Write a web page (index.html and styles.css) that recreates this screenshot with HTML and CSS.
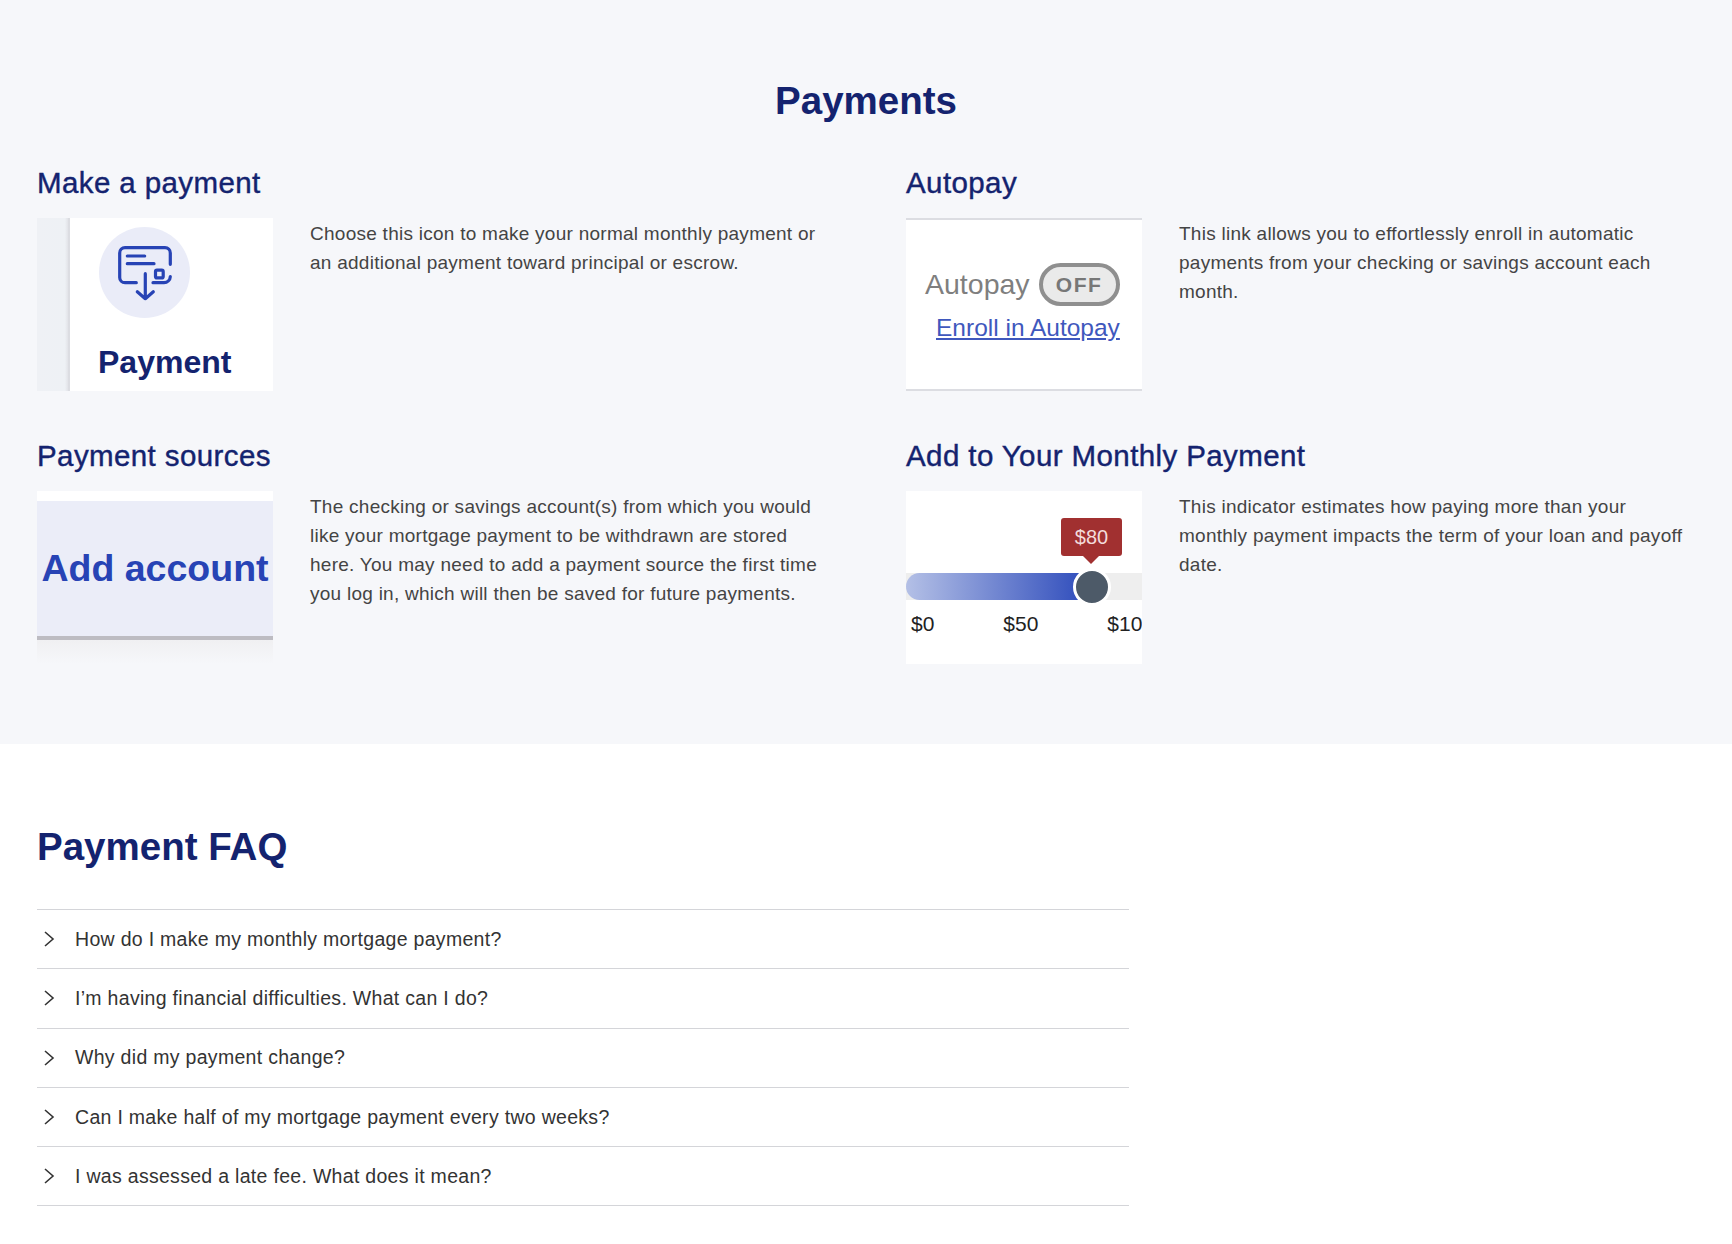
FILE: index.html
```html
<!DOCTYPE html>
<html lang="en">
<head>
    <meta charset="UTF-8">
    <title>Payments</title>
    <link rel="stylesheet" href="styles.css">
</head>
<body>
    <section class="payments">
        <h1>Payments</h1>
        <div class="grid">
            <article class="item">
                <h2>Make a payment</h2>
                <div class="row">
                    <div class="thumb thumb-pay">
                        <div class="pay-side"></div>
                        <div class="pay-main">
                            <div class="pay-circle">
                                <svg width="56" height="56" viewBox="0 0 56 56" fill="none" stroke="#2743b5" stroke-width="3.200" stroke-linecap="round" stroke-linejoin="round">
                                    <path d="M19.300 37.700H8a5.300 5.300 0 0 1-5.300-5.300V8A5.300 5.300 0 0 1 8 2.700h40A5.300 5.300 0 0 1 53.300 8v11.300"/>
                                    <path d="M10.300 11h17.400M10.300 18.700H37"/>
                                    <rect x="38.500" y="25.200" width="7.700" height="7.700" rx="1.500"/>
                                    <path d="M36 37.700h11a6.300 6.300 0 0 0 6.300-6"/>
                                    <path d="M28.300 28.700v25M20.300 46.700l8 7 8-7"/>
                                </svg>
                            </div>
                            <div class="pay-label">Payment</div>
                        </div>
                    </div>
                    <p>Choose this icon to make your normal monthly payment or an additional payment toward principal or escrow.</p>
                </div>
            </article>
            <article class="item">
                <h2>Autopay</h2>
                <div class="row">
                    <div class="thumb thumb-auto">
                        <div class="auto-line">
                            <span>Autopay</span>
                            <span class="auto-toggle">OFF</span>
                        </div>
                        <a class="auto-link">Enroll in Autopay</a>
                    </div>
                    <p>This link allows you to effortlessly enroll in automatic payments from your checking or savings account each month.</p>
                </div>
            </article>
            <article class="item">
                <h2>Payment sources</h2>
                <div class="row">
                    <div class="thumb thumb-add">
                        <div class="add-band">Add account</div>
                        <div class="add-fade"></div>
                    </div>
                    <p>The checking or savings account(s) from which you would like your mortgage payment to be withdrawn are stored here. You may need to add a payment source the first time you log in, which will then be saved for future payments.</p>
                </div>
            </article>
            <article class="item">
                <h2>Add to Your Monthly Payment</h2>
                <div class="row">
                    <div class="thumb thumb-slider">
                        <div class="slider-tip">$80</div>
                        <div class="slider-track">
                            <div class="slider-fill"></div>
                            <div class="slider-knob"></div>
                        </div>
                        <div class="slider-labels">
                            <span>$0</span>
                            <span>$50</span>
                            <span>$100</span>
                        </div>
                    </div>
                    <p>This indicator estimates how paying more than your monthly payment impacts the term of your loan and payoff date.</p>
                </div>
            </article>
        </div>
    </section>

    <section class="faq">
        <h2 class="faq-title">Payment FAQ</h2>
        <ul class="faq-list">
            <li><svg class="chev" width="12" height="18" viewBox="0 0 12 18"><path d="M2 2l8 7-8 7" fill="none" stroke="#333" stroke-width="1.600"/></svg>How do I make my monthly mortgage payment?</li>
            <li><svg class="chev" width="12" height="18" viewBox="0 0 12 18"><path d="M2 2l8 7-8 7" fill="none" stroke="#333" stroke-width="1.600"/></svg>I’m having financial difficulties. What can I do?</li>
            <li><svg class="chev" width="12" height="18" viewBox="0 0 12 18"><path d="M2 2l8 7-8 7" fill="none" stroke="#333" stroke-width="1.600"/></svg>Why did my payment change?</li>
            <li><svg class="chev" width="12" height="18" viewBox="0 0 12 18"><path d="M2 2l8 7-8 7" fill="none" stroke="#333" stroke-width="1.600"/></svg>Can I make half of my mortgage payment every two weeks?</li>
            <li><svg class="chev" width="12" height="18" viewBox="0 0 12 18"><path d="M2 2l8 7-8 7" fill="none" stroke="#333" stroke-width="1.600"/></svg>I was assessed a late fee. What does it mean?</li>
        </ul>
    </section>
</body>
</html>
```

FILE: styles.css
```css
* {
    box-sizing: border-box;
    font-family: 'Liberation Sans', Arial, sans-serif;
}

body {
    margin: 0;
    background-color: #fff;
}

.payments {
    background-color: #f6f7fa;
    height: 744px;
    padding: 78px 37px 0;
}

h1 {
    margin: 0 0 42px;
    font-size: 38.500px;
    line-height: 46px;
    color: #14236f;
    text-align: center;
}

.grid {
    display: grid;
    grid-template-columns: 869px 1fr;
    row-gap: 48px;
}

.item h2 {
    margin: 0 0 18px;
    font-size: 29.500px;
    line-height: 34px;
    font-weight: 400;
    letter-spacing: 0.4px;
    color: #14236f;
    -webkit-text-stroke: 0.4px #14236f;
}

.row {
    display: flex;
    gap: 37px;
    height: 173px;
}

.row p {
    margin: 0;
    padding-top: 1px;
    width: 515px;
    font-size: 19px;
    line-height: 29px;
    letter-spacing: 0.26px;
    color: #444;
}

.thumb {
    flex: 0 0 236px;
    height: 173px;
    background-color: #fff;
    overflow: hidden;
}

/* make a payment */
.thumb-pay {
    display: flex;
}

.pay-side {
    width: 33px;
    background: linear-gradient(90deg, #eff1f5, #eef1f5 90%, #e2e3e8);
    border-right: 2px solid #dcdde2;
}

.pay-main {
    flex: 1;
    padding: 9px 0 0 29px;
}

.pay-circle {
    display: flex;
    align-items: center;
    justify-content: center;
    width: 91px;
    height: 91px;
    border-radius: 50%;
    background-color: #eaecf8;
}

.pay-label {
    margin-top: 25px;
    margin-left: -1px;
    font-size: 32px;
    line-height: 38px;
    font-weight: 700;
    color: #14236f;
}

/* autopay */
.thumb-auto {
    border-top: 2px solid #dcdde2;
    border-bottom: 2px solid #dcdde2;
    padding: 43px 0 0 19px;
}

.auto-line {
    display: flex;
    align-items: center;
    gap: 9px;
    font-size: 28.500px;
    color: #7f7f7f;
}

.auto-toggle {
    display: flex;
    align-items: center;
    justify-content: center;
    width: 81px;
    height: 43px;
    border: 4px solid #8f8f8f;
    border-radius: 22px;
    background-color: #eaeaea;
    font-size: 21px;
    font-weight: 700;
    letter-spacing: 1.500px;
    color: #777;
}

.auto-link {
    display: block;
    margin: 7px 0 0 11px;
    font-size: 24.500px;
    line-height: 30px;
    color: #3f58bd;
    text-decoration: underline;
}

/* payment sources */
.thumb-add {
    display: flex;
    flex-direction: column;
}

.add-band {
    margin-top: 10px;
    height: 139px;
    padding-top: 42px;
    border-bottom: 4px solid #bdbcc2;
    background-color: #ebedf8;
    font-size: 37.500px;
    line-height: 50px;
    font-weight: 700;
    color: #2743b5;
    text-align: center;
    white-space: nowrap;
}

.add-fade {
    flex: 1;
    background: linear-gradient(#f0f0f2, #f6f7fa);
}

/* slider */
.thumb-slider {
    position: relative;
    padding-top: 82px;
}

.slider-tip {
    position: absolute;
    top: 27px;
    left: 155px;
    width: 61px;
    height: 38px;
    border-radius: 3px;
    background-color: #a13030;
    color: #f3dcdc;
    font-size: 20px;
    line-height: 38px;
    text-align: center;
}

.slider-tip::after {
    content: '';
    position: absolute;
    left: 22px;
    bottom: -8px;
    border-left: 8px solid transparent;
    border-right: 8px solid transparent;
    border-top: 8px solid #a13030;
}

.slider-track {
    position: relative;
    height: 27px;
    background-color: #eee;
}

.slider-fill {
    width: 175px;
    height: 27px;
    border-radius: 14px 0 0 14px;
    background: linear-gradient(90deg, #b4c0e6, #3350bd);
}

.slider-knob {
    position: absolute;
    top: -5px;
    left: 167px;
    width: 38px;
    height: 38px;
    border: 3px solid #fff;
    border-radius: 50%;
    background-color: #4d5a68;
}

.slider-labels {
    display: flex;
    justify-content: space-between;
    width: 248px;
    margin-top: 11px;
    padding-left: 5px;
    font-size: 21px;
    line-height: 26px;
    color: #222;
}

/* faq */
.faq {
    padding: 78px 37px 0;
}

.faq-title {
    margin: 0 0 37px;
    font-size: 38.500px;
    line-height: 50px;
    font-weight: 700;
    color: #14236f;
}

.faq-list {
    width: 1092px;
    margin: 0;
    padding: 0;
    list-style: none;
    border-top: 1px solid #d4d5d9;
}

.faq-list li {
    display: flex;
    align-items: center;
    height: 59.300px;
    border-bottom: 1px solid #d4d5d9;
    font-size: 19.500px;
    letter-spacing: 0.3px;
    color: #333;
}

.chev {
    flex: none;
    margin: 0 20px 0 6px;
}
```
